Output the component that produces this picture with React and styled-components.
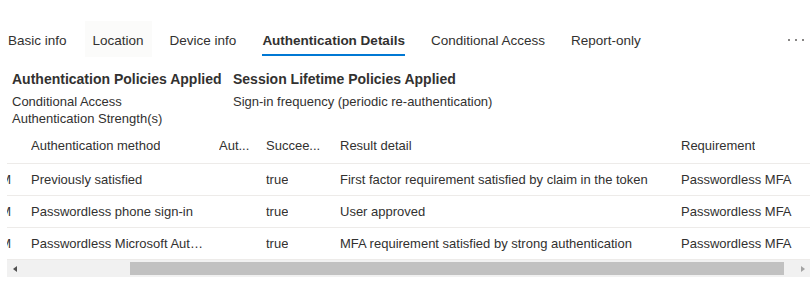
import { useEffect, useRef } from 'react';
import styled, { createGlobalStyle } from 'styled-components';

const GlobalStyle = createGlobalStyle`
  body {
    margin: 0;
    background: #ffffff;
    font-family: "Segoe UI", "Liberation Sans", Arial, sans-serif;
    color: #323130;
  }
`

const Page = styled.div`
  width: 810px;
  height: 283px;
  overflow: hidden;
`

const TabBar = styled.div`
  display: flex;
  align-items: stretch;
  margin-top: 21px;
  height: 36px;
`

const Tab = styled.div`
  position: relative;
  display: flex;
  align-items: center;
  padding: 2px 8px 0;
  margin-right: 10px;
  font-size: 13.5px;
  font-weight: ${({ active }) => (active ? 600 : 400)};
  color: #323130;
  background: ${({ hovered }) => (hovered ? "#fbfbfa" : "transparent")};
  white-space: nowrap;
`

const Underline = styled.span`
  position: absolute;
  left: 8px;
  right: 8px;
  bottom: 1px;
  height: 2px;
  background: #0078d4;
`

const More = styled.div`
  margin-left: auto;
  display: flex;
  align-items: center;
  gap: 5px;
  padding: 2px 6px 0 0;

  span {
    width: 2px;
    height: 2px;
    border-radius: 50%;
    background: #605e5c;
  }
`

const Summary = styled.div`
  display: grid;
  grid-template-columns: 221px 1fr;
  padding-left: 12px;
  margin-top: 12px;
`

const Heading = styled.div`
  font-size: 14px;
  font-weight: 700;
  line-height: 20px;
  margin-bottom: 4px;
`

const Detail = styled.div`
  font-size: 13px;
  line-height: 17px;
`

const Viewport = styled.div`
  margin: 2px 0 0 7px;
  overflow: hidden;
`

const Grid = styled.div`
  display: grid;
  grid-template-columns: 150px 188px 47px 74px 341px 160px;
  width: 960px;
  font-size: 13px;
`

const Cell = styled.div`
  height: ${({ head }) => (head ? "33px" : "31px")};
  display: flex;
  align-items: center;
  justify-content: ${({ end }) => (end ? "flex-end" : "flex-start")};
  padding: ${({ end, tight }) => (end ? "0 8px 0 0" : tight ? "0 0 0 12px" : "0 4px 0 12px")};
  padding-bottom: ${({ head }) => (head ? "1px" : "0")};
  border-bottom: 1px solid #edebe9;
  white-space: nowrap;
  overflow: hidden;
  min-width: 0;

  span {
    overflow: hidden;
    text-overflow: ellipsis;
  }
`

const Scrollbar = styled.div`
  display: grid;
  grid-template-columns: 15px 1fr 15px;
  height: 17px;
  margin-left: 7px;
  background: #f1f1f1;
`

const Arrow = styled.div`
  display: flex;
  align-items: center;
  justify-content: center;

  &::before {
    content: "";
    border-top: 3.5px solid transparent;
    border-bottom: 3.5px solid transparent;
    ${({ dir }) => (dir === "left"
      ? "border-right: 4px solid #505050;"
      : "border-left: 4px solid #a3a3a3;")}
  }
`

const Track = styled.div`
  padding: 2px 11px 2px 108px;
`

const Thumb = styled.div`
  height: 100%;
  background: #c1c1c1;
`

const columns = ["Date", "Authentication method", "Authentication step", "Succeeded", "Result detail", "Requirement"];
const heads = ["", "Authentication method", "Aut...", "Succee...", "Result detail", "Requirement"];

const rows = [
  ["3/14/2024, 10:22:31 AM", "Previously satisfied", "", "true", "First factor requirement satisfied by claim in the token", "Passwordless MFA"],
  ["3/14/2024, 10:22:31 AM", "Passwordless phone sign-in", "", "true", "User approved", "Passwordless MFA"],
  ["3/14/2024, 10:22:31 AM", "Passwordless Microsoft Authenticator", "", "true", "MFA requirement satisfied by strong authentication", "Passwordless MFA"],
];

export default function App() {
  const viewport = useRef(null);

  useEffect(() => {
    if (viewport.current) viewport.current.scrollLeft = 138;
  }, []);

  return (
    <Page>
      <GlobalStyle />
      <TabBar>
        <Tab>Basic info</Tab>
        <Tab hovered>Location</Tab>
        <Tab>Device info</Tab>
        <Tab active>Authentication Details<Underline /></Tab>
        <Tab>Conditional Access</Tab>
        <Tab>Report-only</Tab>
        <More><span /><span /><span /></More>
      </TabBar>

      <Summary>
        <div>
          <Heading>Authentication Policies Applied</Heading>
          <Detail>Conditional Access<br />Authentication Strength(s)</Detail>
        </div>
        <div>
          <Heading>Session Lifetime Policies Applied</Heading>
          <Detail>Sign-in frequency (periodic re-authentication)</Detail>
        </div>
      </Summary>

      <Viewport ref={viewport}>
        <Grid>
          {heads.map((h, i) => (
            <Cell head key={i} end={i === 0} tight={i === 1} title={columns[i]}><span>{h}</span></Cell>
          ))}
          {rows.map((r, ri) => r.map((c, ci) => (
            <Cell key={ri + "-" + ci} end={ci === 0} tight={ci === 1}><span>{c}</span></Cell>
          )))}
        </Grid>
      </Viewport>

      <Scrollbar>
        <Arrow dir="left" />
        <Track><Thumb /></Track>
        <Arrow dir="right" />
      </Scrollbar>
    </Page>
  )
}
